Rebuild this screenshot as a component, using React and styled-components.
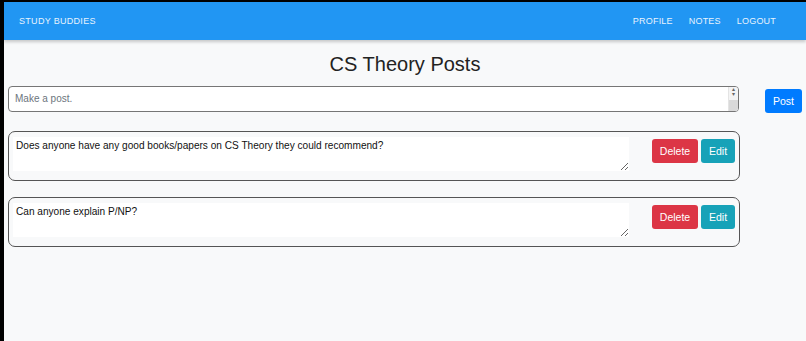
import React, { useState } from "react";
import styled, { createGlobalStyle } from "styled-components";

const GlobalStyle = createGlobalStyle`
  html, body {
    margin: 0;
    padding: 0;
    background: #000;
  }
  * {
    box-sizing: border-box;
  }
`;

const posts = [
    { id: 1, body: "Does anyone have any good books/papers on CS Theory they could recommend?" },
    { id: 2, body: "Can anyone explain P/NP?" },
];

const App = () => {
    const [draft, setDraft] = useState("");

    return (
        <>
            <GlobalStyle />
            <StPage>
                <StHeader>
                    <StBrand>Study Buddies</StBrand>
                    <StNav>
                        <StNavLink>Profile</StNavLink>
                        <StNavLink>Notes</StNavLink>
                        <StNavLink>Logout</StNavLink>
                    </StNav>
                </StHeader>

                <StTitle>CS Theory Posts</StTitle>

                <StComposer>
                    <StInputWrap>
                        <StPostInput
                            rows={1}
                            placeholder="Make a post."
                            value={draft}
                            onChange={(e) => setDraft(e.target.value)}
                        />
                        {/* the scrollbar the browser drew in the screenshot */}
                        <StScroll>
                            <StArrow>▴</StArrow>
                            <StArrow>▾</StArrow>
                            <StThumb />
                        </StScroll>
                    </StInputWrap>
                    <StButton $color="#007bff" $width="37px" $offset="3px">Post</StButton>
                </StComposer>

                <StPostList>
                    {posts.map((post) => (
                        <StCard key={post.id}>
                            <StCardText defaultValue={post.body} />
                            <StActions>
                                <StButton $color="#dc3545" $width="46px">Delete</StButton>
                                <StButton $color="#17a2b8" $width="34px">Edit</StButton>
                            </StActions>
                        </StCard>
                    ))}
                </StPostList>
            </StPage>
        </>
    );
};

export default App;

const StPage = styled.div`
  min-height: 100vh;
  margin-top: 2px;
  margin-left: 4px;
  background-color: #f8f9fa;
  font-family: "Liberation Sans", Arial, sans-serif;
`;

const StHeader = styled.header`
  display: flex;
  justify-content: space-between;
  align-items: center;
  height: 38px;
  padding: 0 30px 0 15px;
  background-color: #2196f3;
  box-shadow: 0 2px 3px rgba(0, 0, 0, 0.2);
  color: #e8f3fd;
`;

const StBrand = styled.div`
  font-size: 9px;
  letter-spacing: 0.3px;
  text-transform: uppercase;
  font-weight: 500;
`;

const StNav = styled.nav`
  display: flex;
  gap: 16px;
`;

const StNavLink = styled.span`
  font-size: 9px;
  letter-spacing: 0.2px;
  text-transform: uppercase;
  cursor: pointer;
`;

const StTitle = styled.h1`
  margin: 12px 0 10px;
  text-align: center;
  font-size: 20px;
  line-height: 24px;
  font-weight: 400;
  color: #222;
`;

const StComposer = styled.div`
  display: flex;
  align-items: flex-start;
  gap: 26px;
  padding: 0 4px;
`;

const StInputWrap = styled.div`
  position: relative;
  width: 731px;
  height: 26px;
`;

const StPostInput = styled.textarea`
  display: block;
  width: 100%;
  height: 100%;
  padding: 6px 20px 6px 6px;
  border: 1px solid #767676;
  border-radius: 4px;
  background: #fff;
  font-family: inherit;
  font-size: 10px;
  line-height: 12px;
  resize: none;
  overflow: hidden;
  outline: none;

  &::placeholder {
    color: #6c757d;
  }
`;

const StScroll = styled.div`
  position: absolute;
  top: 1px;
  right: 1px;
  bottom: 1px;
  width: 10px;
  display: flex;
  flex-direction: column;
  align-items: center;
  border-left: 1px solid #e4e4e4;
  border-radius: 0 3px 3px 0;
  background: #f4f4f4;
  overflow: hidden;
`;

const StArrow = styled.span`
  font-size: 6px;
  line-height: 5px;
  color: #666;
`;

const StThumb = styled.div`
  flex: 1;
  width: 100%;
  margin-top: 3px;
  background: #d9d9d9;
`;

const StButton = styled.button`
  width: ${(p) => p.$width};
  height: 24px;
  margin-top: ${(p) => p.$offset || "0"};
  padding: 0;
  border: none;
  border-radius: 3px;
  background-color: ${(p) => p.$color};
  color: #fff;
  font-family: inherit;
  font-size: 10.5px;
  cursor: pointer;
`;

const StPostList = styled.div`
  display: flex;
  flex-direction: column;
  gap: 16px;
  margin-top: 18px;
  padding: 0 4px;
`;

const StCard = styled.div`
  display: flex;
  align-items: flex-start;
  width: 732px;
  height: 50px;
  padding: 5px 4px 0 4px;
  border: 1px solid #555;
  border-radius: 7px;
`;

const StCardText = styled.textarea`
  width: 616px;
  height: 34px;
  padding: 3px 4px 3px 3px;
  border: none;
  background: #fff;
  font-family: inherit;
  font-size: 10.1px;
  line-height: 12px;
  color: #111;
  outline: none;
`;

const StActions = styled.div`
  display: flex;
  gap: 3px;
  margin-left: auto;
  margin-top: 2px;
`;
